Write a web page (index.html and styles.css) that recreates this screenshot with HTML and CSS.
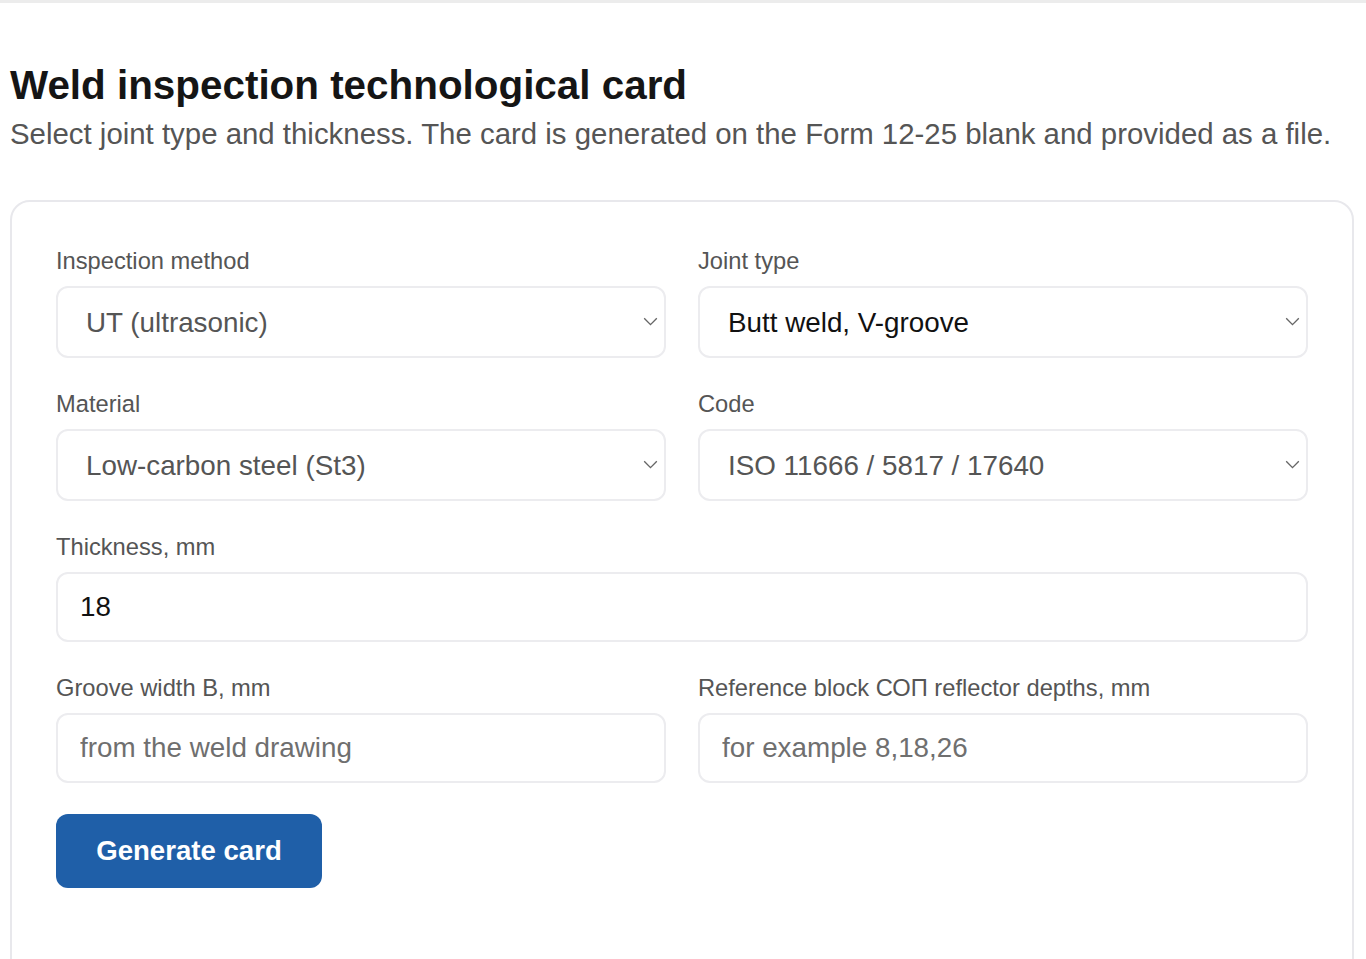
FILE: index.html
```html
<!DOCTYPE html>
<html>
<head>
    <title>Weld inspection technological card</title>
    <link rel="stylesheet" href="styles.css">
</head>
<body>
    <div class="page">
        <h1>Weld inspection technological card</h1>
        <p class="lead">Select joint type and thickness. The card is generated on the Form 12-25 blank and provided as a file.</p>

        <form class="card" id="cardForm">
            <div class="grid">
                <div class="field">
                    <label for="method">Inspection method</label>
                    <div class="select-wrap">
                        <select id="method" class="muted">
                            <option>UT (ultrasonic)</option>
                        </select>
                        <svg class="chevron" viewBox="0 0 16 10"><path d="M1 1.5l7 7 7-7"/></svg>
                    </div>
                </div>

                <div class="field">
                    <label for="joint">Joint type</label>
                    <div class="select-wrap">
                        <select id="joint">
                            <option>Butt weld, V-groove</option>
                            <option>Butt weld, X-groove</option>
                            <option>Fillet weld</option>
                        </select>
                        <svg class="chevron" viewBox="0 0 16 10"><path d="M1 1.5l7 7 7-7"/></svg>
                    </div>
                </div>

                <div class="field">
                    <label for="material">Material</label>
                    <div class="select-wrap">
                        <select id="material" class="muted">
                            <option>Low-carbon steel (St3)</option>
                        </select>
                        <svg class="chevron" viewBox="0 0 16 10"><path d="M1 1.5l7 7 7-7"/></svg>
                    </div>
                </div>

                <div class="field">
                    <label for="code">Code</label>
                    <div class="select-wrap">
                        <select id="code" class="muted">
                            <option>ISO 11666 / 5817 / 17640</option>
                        </select>
                        <svg class="chevron" viewBox="0 0 16 10"><path d="M1 1.5l7 7 7-7"/></svg>
                    </div>
                </div>

                <div class="field wide">
                    <label for="thickness">Thickness, mm</label>
                    <input type="text" id="thickness" value="18">
                </div>

                <div class="field">
                    <label for="groove">Groove width B, mm</label>
                    <input type="text" id="groove" placeholder="from the weld drawing">
                </div>

                <div class="field">
                    <label for="depths">Reference block СОП reflector depths, mm</label>
                    <input type="text" id="depths" placeholder="for example 8,18,26">
                </div>
            </div>

            <button type="button">Generate card</button>
        </form>
    </div>
</body>
</html>
```

FILE: styles.css
```css
body {
    margin: 0;
    background: #fff;
    font-family: "Liberation Sans", Arial, Helvetica, sans-serif;
    color: #111;
    border-top: 3px solid #ececec;
}

.page {
    padding: 0 12px 0 10px;
}

h1 {
    margin: 56px 0 0;
    font-size: 40.4px;
    line-height: 52px;
    color: #151515;
}

.lead {
    margin: 3px 0 46px;
    font-size: 29.4px;
    line-height: 40px;
    color: #555;
}

/* main form card */
.card {
    border: 2px solid #e8e8ec;
    border-radius: 20px;
    padding: 44px 44px 100px;
    background: #fff;
}

.grid {
    display: grid;
    grid-template-columns: 1fr 1fr;
    column-gap: 32px;
    row-gap: 31px;
}

.field {
    display: flex;
    flex-direction: column;
}

.field.wide {
    grid-column: 1 / 3;
}

label {
    font-size: 23.7px;
    line-height: 30px;
    color: #555;
    margin-bottom: 10px;
}

.select-wrap {
    position: relative;
}

select,
input {
    width: 100%;
    box-sizing: border-box;
    border: 2px solid #ececef;
    border-radius: 12px;
    background: #fff;
    font-family: inherit;
    font-size: 27.8px;
    color: #111;
    outline: none;
}

select {
    appearance: none;
    -webkit-appearance: none;
    height: 72px;
    padding: 0 50px 0 28px;
}

select.muted {
    color: #555;
}

input {
    height: 70px;
    padding: 0 22px;
}

input::placeholder {
    color: #6f6f6f;
}

.chevron {
    position: absolute;
    right: 8px;
    top: 31px;
    width: 15px;
    height: 9px;
    fill: none;
    stroke: #666;
    stroke-width: 1.5;
    pointer-events: none;
}

button {
    margin-top: 31px;
    width: 266px;
    height: 74px;
    border: none;
    border-radius: 12px;
    background: #1f5fa8;
    color: #fff;
    font-family: inherit;
    font-size: 27.6px;
    font-weight: 700;
    cursor: pointer;
}
```
